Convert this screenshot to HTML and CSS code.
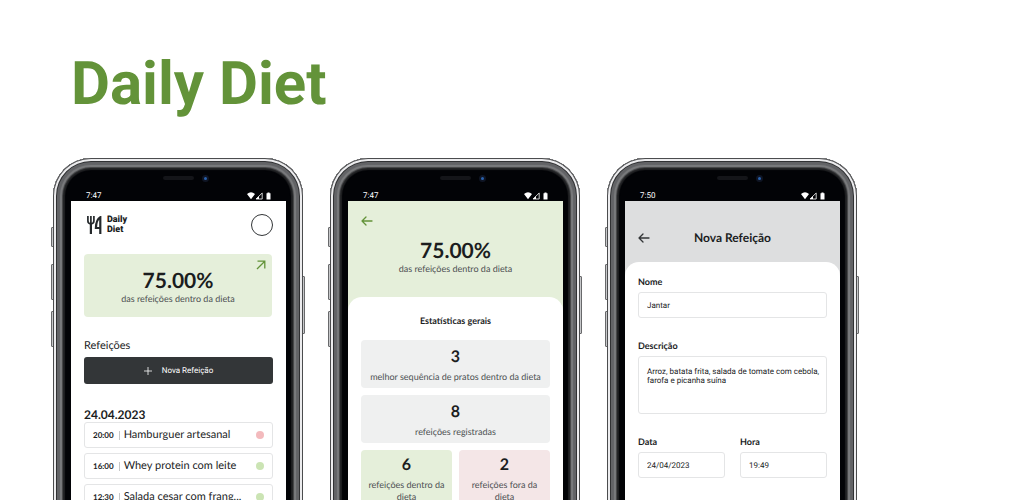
FILE: index.html
```html
<!DOCTYPE html>
<html lang="pt-BR">
<head>
<meta charset="utf-8">
<meta name="viewport" content="width=device-width, initial-scale=1">
<title>Daily Diet</title>
<link rel="stylesheet" href="styles.css">
</head>
<body>
<svg class="defs" aria-hidden="true">
  <symbol id="status" viewBox="0 0 24 8"><path fill="#fff" d="M0 2Q4-1.300 8 2L4 7.200zM23.500 1.200h-1V.4h-2v.8h-1v6.400h4z"/><path fill="none" stroke="#fff" stroke-width=".8" d="M15.200 1v6H9z"/><path fill="#fff" d="M12 4.200V7H9z"/></symbol>
  <symbol id="back" viewBox="0 0 12 10"><path fill="none" stroke="currentColor" stroke-width="1.300" stroke-linecap="round" stroke-linejoin="round" d="M5 1 1 5l4 4M1 5h10"/></symbol>
</svg>
<main class="page">
  <h1 class="title">Daily Diet</h1>
  <div class="phones">
    <section class="phone" aria-label="Início">
      <span class="key key-mute"></span><span class="key key-up"></span><span class="key key-down"></span><span class="key key-power"></span>
      <div class="body">
        <div class="sensors"><span class="speaker"></span><span class="camera"></span></div>
        <div class="status"><span>7:47</span><svg><use href="#status"/></svg></div>
        <div class="screen home">
          <header class="brand">
            <svg class="logo" viewBox="0 0 15 18"><path fill="none" stroke="#24282b" stroke-width="1.700" stroke-linejoin="round" d="M.9 0v5q0 2.500 3 3 3-.5 3-3V0M3.900 0v8"/><path fill="none" stroke="#24282b" stroke-width="2.200" d="M3.900 7v11M13.300 18V1.300Q9.200 3.500 8.900 12h4.400"/></svg>
            <span class="brand-name">Daily<br>Diet</span>
            <span class="avatar"></span>
          </header>
          <a class="summary" href="#stats">
            <svg class="open" viewBox="0 0 10 10"><path fill="none" stroke="#639339" stroke-width="1.300" d="M1.500 1.200h7.300v7.300M8.800 1.200 1 9"/></svg>
            <strong class="percent">75.00%</strong>
            <span class="caption">das refeições dentro da dieta</span>
          </a>
          <p class="meals-label">Refeições</p>
          <button class="new-meal" type="button"><svg viewBox="0 0 8 8"><path stroke="#fff" stroke-width=".8" d="M4 0v8M0 4h8"/></svg>Nova Refeição</button>
          <h2 class="date">24.04.2023</h2>
          <ul class="meals">
            <li class="meal"><time>20:00</time><span class="meal-name">Hamburguer artesanal</span><span class="dot dot-off"></span></li>
            <li class="meal"><time>16:00</time><span class="meal-name">Whey protein com leite</span><span class="dot"></span></li>
            <li class="meal"><time>12:30</time><span class="meal-name">Salada cesar com frang...</span><span class="dot"></span></li>
          </ul>
        </div>
      </div>
    </section>

    <section class="phone" id="stats" aria-label="Estatísticas">
      <span class="key key-mute"></span><span class="key key-up"></span><span class="key key-down"></span><span class="key key-power"></span>
      <div class="body">
        <div class="sensors"><span class="speaker"></span><span class="camera"></span></div>
        <div class="status"><span>7:47</span><svg><use href="#status"/></svg></div>
        <div class="screen stats">
          <header class="stats-head">
            <button class="back back-green" type="button" aria-label="Voltar"><svg><use href="#back"/></svg></button>
            <strong class="percent">75.00%</strong>
            <span class="caption">das refeições dentro da dieta</span>
          </header>
          <div class="sheet">
            <h2 class="stats-title">Estatísticas gerais</h2>
            <div class="cards">
              <div class="card wide"><strong>3</strong><span class="caption">melhor sequência de pratos dentro da dieta</span></div>
              <div class="card wide"><strong>8</strong><span class="caption">refeições registradas</span></div>
              <div class="card card-in"><strong>6</strong><span class="caption">refeições dentro da dieta</span></div>
              <div class="card card-out"><strong>2</strong><span class="caption">refeições fora da dieta</span></div>
            </div>
          </div>
        </div>
      </div>
    </section>

    <section class="phone" aria-label="Nova Refeição">
      <span class="key key-mute"></span><span class="key key-up"></span><span class="key key-down"></span><span class="key key-power"></span>
      <div class="body">
        <div class="sensors"><span class="speaker"></span><span class="camera"></span></div>
        <div class="status"><span>7:50</span><svg><use href="#status"/></svg></div>
        <div class="screen create">
          <header class="create-head">
            <button class="back" type="button" aria-label="Voltar"><svg><use href="#back"/></svg></button>
            <h2 class="create-title">Nova Refeição</h2>
          </header>
          <form class="sheet form">
            <div class="field"><label for="name">Nome</label><input id="name" type="text" value="Jantar"></div>
            <div class="field"><label for="desc">Descrição</label><textarea id="desc">Arroz, batata frita, salada de tomate com cebola, farofa e picanha suína</textarea></div>
            <div class="row">
              <div class="field"><label for="date">Data</label><input id="date" type="text" value="24/04/2023"></div>
              <div class="field"><label for="hour">Hora</label><input id="hour" type="text" value="19:49"></div>
            </div>
          </form>
        </div>
      </div>
    </section>
  </div>
</main>
</body>
</html>
```
FILE: styles.css
```css
* { box-sizing: border-box; }
body {
  margin: 0;
  background: #fff;
  color: #1b1d1e;
  font-family: Lato, "Noto Sans", sans-serif;
  font-size: 9px;
  text-rendering: geometricPrecision;
}
h1, h2, p, ul { margin: 0; padding: 0; }
button, input, textarea { font: inherit; color: inherit; text-rendering: inherit; }
.defs { position: absolute; width: 0; height: 0; }

.page {
  display: flex;
  flex-direction: column;
  height: 100vh;
  min-height: 360px;
  overflow: hidden;
}
.title {
  padding: 49px 71px 39px;
  color: #639339;
  font: bold 60px/70px Roboto, sans-serif;
}
.phones { display: flex; flex: 1; gap: 27px; padding: 0 53px; min-height: 0; }

/* Device frame */
.phone { position: relative; flex: 0 0 250px; height: 520px; }
.body {
  position: relative;
  height: 100%;
  padding: 16px 17px 0 18px;
  border-radius: 38px 38px 0 0;
  background: #020306;
  box-shadow:
    inset 0 0 0 1px #4b4c4e,
    inset 0 0 0 3px #ececee,
    inset 0 0 0 4px #303133,
    inset 0 0 1px 7px #626366,
    inset 0 0 1px 9px #7c7d7f,
    inset 0 0 1px 10px #454648,
    inset 0 0 1px 12px #202123;
}
.key {
  position: absolute;
  left: -2px;
  width: 4px;
  border: 1px solid #68696b;
  border-radius: 1px;
  background: #c7c8ca;
}
.key-mute { top: 69px; height: 20px; }
.key-up { top: 106px; height: 36px; }
.key-down { top: 153px; height: 36px; }
.key-power { top: 118px; left: auto; right: -2px; height: 58px; }

.sensors { display: flex; justify-content: center; align-items: center; gap: 8px; height: 8px; padding-left: 14px; }
.speaker { width: 31px; height: 4px; border-radius: 2px; background: #141519; }
.camera { width: 7px; height: 7px; border: 2px solid #0f1524; border-radius: 50%; background: #2a62ad; }
.status {
  display: flex;
  justify-content: space-between;
  align-items: center;
  margin-top: 7px;
  height: 12px;
  padding: 1px 15px 0;
  color: #fff;
  font: 8px/10px Roboto, sans-serif;
}
.status svg { width: 24px; height: 8px; }
.screen { height: 100%; background: #fff; overflow: hidden; }

/* Home */
.home { padding: 12px 13px; }
.brand { display: flex; align-items: center; gap: 5px; height: 24px; padding-left: 3px; }
.logo { width: 15px; height: 18px; }
.brand-name { font: 900 9px/10px Roboto, sans-serif; }
.avatar { width: 22px; height: 22px; margin-left: auto; border: 1px solid #333638; border-radius: 50%; }
.summary {
  position: relative;
  display: flex;
  flex-direction: column;
  align-items: center;
  margin: 17px 1px 0 0;
  padding: 14px 0 12px;
  border-radius: 4px;
  background: #e5efda;
  color: inherit;
  text-decoration: none;
}
.open { position: absolute; top: 6px; right: 6px; width: 10px; height: 10px; }
.percent { font-size: 21px; line-height: 25px; }
.caption { color: #4d5052; font-size: 9px; line-height: 12px; }
.meals-label { margin-top: 22px; font-size: 11px; line-height: 14px; }
.new-meal {
  display: flex;
  justify-content: center;
  align-items: center;
  gap: 10px;
  width: 100%;
  height: 27px;
  margin-top: 4px;
  padding: 0;
  border: 0;
  border-radius: 3px;
  background: #333638;
  color: #fff;
  font: 8px/10px Roboto, sans-serif;
}
.new-meal svg { width: 8px; height: 8px; }
.date { margin-top: 24px; font-size: 12px; line-height: 14px; }
.meals { display: grid; gap: 5px; list-style: none; }
.meal {
  display: flex;
  align-items: center;
  height: 26px;
  padding: 0 8px;
  border: 1px solid #e4e5e6;
  border-radius: 3px;
}
.meal time { padding-right: 5px; border-right: 1px solid #c5c7c8; font-size: 8px; font-weight: bold; line-height: 9px; }
.meal-name { margin-left: 4px; font-size: 11px; line-height: 14px; white-space: nowrap; }
.dot { width: 8px; height: 8px; margin-left: auto; border-radius: 50%; background: #cbe4b4; }
.dot-off { background: #f3babd; }

/* Statistics */
.back { display: block; padding: 0; border: 0; background: none; color: #333638; }
.back-green { align-self: flex-start; color: #639339; }
.back svg { display: block; width: 12px; height: 10px; }
.stats { background: #e5efda; }
.stats-head { display: flex; flex-direction: column; align-items: center; padding: 15px 13px 22px; }
.stats-head .percent { margin-top: 12px; }
.sheet { height: 100%; border-radius: 14px 14px 0 0; background: #fff; }
.stats .sheet { padding: 18px 13px; }
.stats-title { font-size: 9px; line-height: 12px; text-align: center; }
.cards { display: grid; grid-template-columns: 1fr 1fr; gap: 7px; margin-top: 13px; }
.card {
  display: flex;
  flex-direction: column;
  align-items: center;
  gap: 5px;
  padding: 6px 7px;
  border-radius: 4px;
  text-align: center;
}
.card strong { font-size: 16px; line-height: 18px; }
.wide { grid-column: 1 / -1; padding: 8px 0 5px; background: #eff0f0; }
.card-in { background: #e5efda; }
.card-out { background: #f4e6e7; }

/* Meal form */
.create { background: #dddedf; }
.create-head { display: grid; grid-template-columns: 1fr auto 1fr; align-items: center; padding: 28px 13px 15px; }
.create-title { font-size: 12px; line-height: 18px; }
.form { display: flex; flex-direction: column; gap: 22px; padding: 14px 13px; }
.field { display: flex; flex-direction: column; gap: 4px; flex: 1 1 0; min-width: 0; }
.form > .field { flex: none; }
.field label { font-size: 9px; font-weight: bold; line-height: 12px; }
.field input, .field textarea {
  width: 100%;
  height: 26px;
  padding: 0 8px;
  border: 1px solid #e4e5e6;
  border-radius: 3px;
  background: #fff;
  font: 8px/9px Roboto, sans-serif;
}
.field textarea { height: 58px; padding: 10px 2px 10px 8px; resize: none; overflow: hidden; }
.row { display: flex; gap: 15px; }
```
